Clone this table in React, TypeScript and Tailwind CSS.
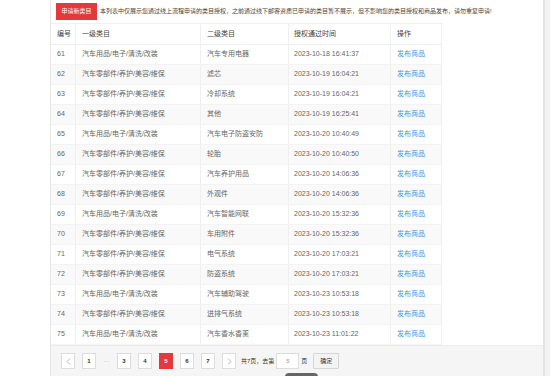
import React from "react";

const rows: [string, string, string, string][] = [
  ["61", "汽车用品/电子/清洗/改装", "汽车专用电器", "2023-10-18 16:41:37"],
  ["62", "汽车零部件/养护/美容/维保", "滤芯", "2023-10-19 16:04:21"],
  ["63", "汽车零部件/养护/美容/维保", "冷却系统", "2023-10-19 16:04:21"],
  ["64", "汽车零部件/养护/美容/维保", "其他", "2023-10-19 16:25:41"],
  ["65", "汽车用品/电子/清洗/改装", "汽车电子防盗安防", "2023-10-20 10:40:49"],
  ["66", "汽车零部件/养护/美容/维保", "轮胎", "2023-10-20 10:40:50"],
  ["67", "汽车零部件/养护/美容/维保", "汽车养护用品", "2023-10-20 14:06:36"],
  ["68", "汽车零部件/养护/美容/维保", "外观件", "2023-10-20 14:06:36"],
  ["69", "汽车用品/电子/清洗/改装", "汽车智能网联", "2023-10-20 15:32:36"],
  ["70", "汽车零部件/养护/美容/维保", "车用附件", "2023-10-20 15:32:36"],
  ["71", "汽车零部件/养护/美容/维保", "电气系统", "2023-10-20 17:03:21"],
  ["72", "汽车零部件/养护/美容/维保", "防盗系统", "2023-10-20 17:03:21"],
  ["73", "汽车用品/电子/清洗/改装", "汽车辅助驾驶", "2023-10-23 10:53:18"],
  ["74", "汽车零部件/养护/美容/维保", "进排气系统", "2023-10-23 10:53:18"],
  ["75", "汽车用品/电子/清洗/改装", "汽车香水香薰", "2023-10-23 11:01:22"],
];

function PageBox({ children, active }: { children: React.ReactNode; active?: boolean }) {
  return (
    <div
      className={
        active
          ? "w-[14px] h-[16px] flex items-center justify-center bg-[#e4393c] border border-[#e4393c] text-white text-[6px] font-bold"
          : "w-[14px] h-[16px] flex items-center justify-center bg-white border border-[#dddddd] text-[#333333] text-[6px] font-bold"
      }
    >
      {children}
    </div>
  );
}

export default function App() {
  return (
    <div className="relative w-[550px] h-[376px] overflow-hidden bg-white flex font-['Liberation_Sans','Noto_Sans_CJK_SC',sans-serif]">
      <div className="w-[50px] shrink-0 bg-white" />
      <div className="w-[493px] shrink-0 flex flex-col border-l border-[#e6e6e6] bg-white">
        {/* header */}
        <div className="h-[23px] flex items-start pt-[3px] pl-[5px]">
          <div className="h-[17px] w-[41px] bg-[#e4393c] text-white text-[6px] flex items-center justify-center">
            申请新类目
          </div>
          <div className="ml-[3px] h-[17px] flex items-center text-[6px] text-[#444444] whitespace-nowrap">
            本列表中仅展示您通过线上流程申请的类目授权，之前通过线下邮寄资质已申请的类目暂不展示，但不影响您的类目授权和商品发布，请勿重复申请!
          </div>
        </div>
        {/* table */}
        <div className="w-[391px] border-t border-[#efefef] text-[7px]">
          <div className="flex h-[21px] items-center text-[#444444] border-b border-[#efefef] bg-white">
            <div className="w-[25px] h-full flex items-center pl-[6px] border-r border-[#efefef]">编号</div>
            <div className="w-[125px] h-full flex items-center pl-[6px] border-r border-[#efefef]">一级类目</div>
            <div className="w-[88px] h-full flex items-center pl-[6px] border-r border-[#efefef]">二级类目</div>
            <div className="w-[102px] h-full flex items-center pl-[5px] border-r border-[#efefef]">授权通过时间</div>
            <div className="w-[51px] h-full flex items-center pl-[6px] border-r border-[#efefef]">操作</div>
          </div>
          {rows.map((r, i) => (
            <div
              key={r[0]}
              className={
                i % 2 === 1
                  ? "flex h-[20px] items-center text-[#666666] bg-[#f9f9f9] border-b border-[#f3f3f3]"
                  : "flex h-[20px] items-center text-[#666666] bg-white border-b border-[#f3f3f3]"
              }
            >
              <div className="w-[25px] h-full flex items-center pl-[6px] border-r border-[#efefef]">{r[0]}</div>
              <div className="w-[125px] h-full flex items-center pl-[6px] border-r border-[#efefef]">{r[1]}</div>
              <div className="w-[88px] h-full flex items-center pl-[6px] border-r border-[#efefef]">{r[2]}</div>
              <div className="w-[102px] h-full flex items-center pl-[5px] border-r border-[#efefef]">{r[3]}</div>
              <div className="w-[51px] h-full flex items-center pl-[6px] border-r border-[#efefef] text-[#4a94e6]">发布商品</div>
            </div>
          ))}
        </div>
        {/* pagination */}
        <div className="flex-1 bg-[#f5f5f5] border-t border-[#ececec] pt-[7px] pl-[10px]">
          <div className="flex items-center gap-[7px]">
            <PageBox>
              <svg width="5" height="7" viewBox="0 0 5 7" fill="none">
                <path d="M4 0.5L1 3.5L4 6.5" stroke="#aaaaaa" strokeWidth="0.8" />
              </svg>
            </PageBox>
            <PageBox>1</PageBox>
            <div className="w-[7px] text-[6px] text-[#bbbbbb] text-center">···</div>
            <PageBox>3</PageBox>
            <PageBox>4</PageBox>
            <PageBox active>5</PageBox>
            <PageBox>6</PageBox>
            <PageBox>7</PageBox>
            <PageBox>
              <svg width="5" height="7" viewBox="0 0 5 7" fill="none">
                <path d="M1 0.5L4 3.5L1 6.5" stroke="#aaaaaa" strokeWidth="0.8" />
              </svg>
            </PageBox>
            <div className="-ml-[2px] text-[6px] text-[#333333] whitespace-nowrap">共7页，去第</div>
            <div className="-ml-[5px] w-[23px] h-[16px] bg-white border border-[#dddddd] text-[6px] text-[#999999] flex items-center justify-center">
              5
            </div>
            <div className="-ml-[5px] text-[6px] text-[#333333]">页</div>
            <div className="-ml-[1px] w-[26px] h-[16px] bg-[#f3f3f3] border border-[#d6d6d6] rounded-[1px] text-[6px] text-[#333333] flex items-center justify-center">
              确定
            </div>
          </div>
        </div>
      </div>
      <div className="w-[2px] shrink-0 bg-[#e3e3e3]" />
      <div className="flex-1 bg-[#f2f2f2]" />
      <div className="absolute left-[285px] top-[373px] w-[33px] h-[8px] rounded-[4px] bg-[#666666]" />
    </div>
  );
}
